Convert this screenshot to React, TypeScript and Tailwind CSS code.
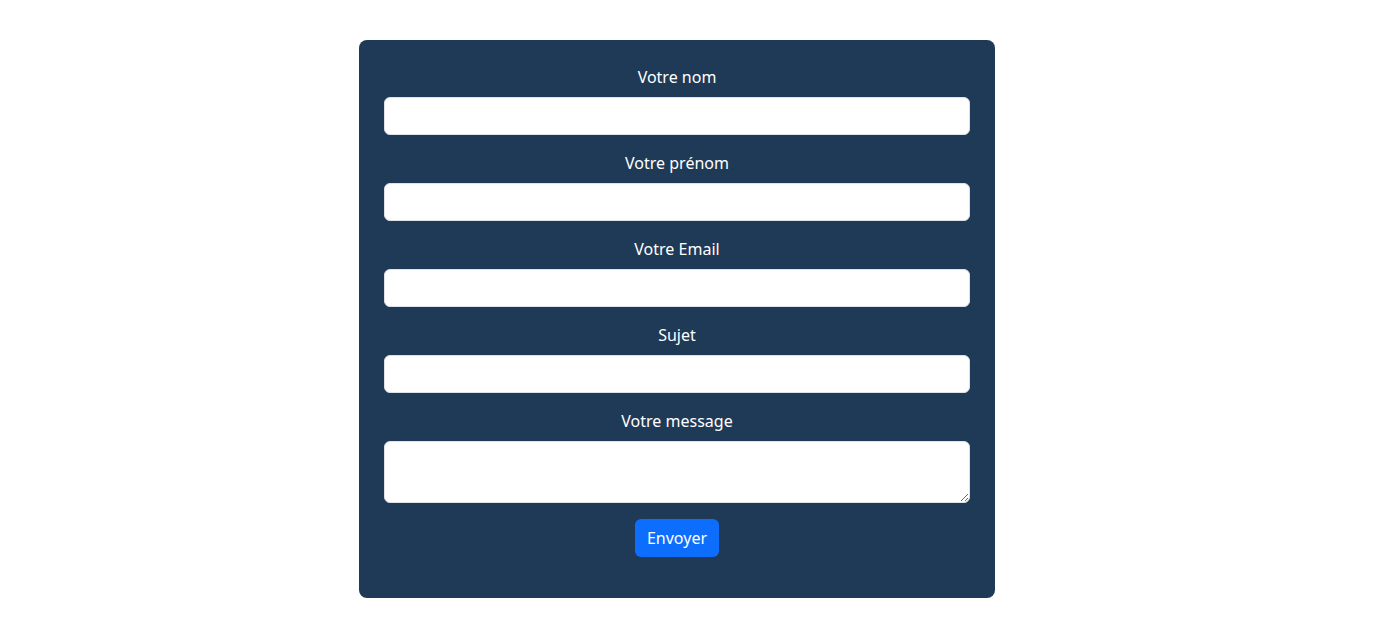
import React from 'react';

const fields = ['Votre nom', 'Votre prénom', 'Votre Email', 'Sujet'];

const App: React.FC = () => {
    return (
        <div className="min-h-[623px] bg-white pt-10 pl-[359px]" style={{ fontFamily: '"Noto Sans", sans-serif' }}>
            {/* Contact card */}
            <form className="w-[636px] rounded-lg bg-[#1f3a57] px-[25px] pt-[25px] pb-[25px] text-white">
                {fields.map((label) => (
                    <div key={label} className="mb-4 flex flex-col items-center">
                        <label className="mb-2 text-base leading-6">{label}</label>
                        <input
                            type="text"
                            className="h-[38px] w-full rounded-md border border-[#dee2e6] bg-white px-3 text-base text-[#212529] outline-none"
                        />
                    </div>
                ))}

                <div className="mb-4 flex flex-col items-center">
                    <label className="mb-2 text-base leading-6">Votre message</label>
                    <textarea
                        rows={2}
                        className="block h-[62px] w-full resize-y rounded-md border border-[#dee2e6] bg-white px-3 py-1.5 text-base text-[#212529] outline-none"
                    />
                </div>

                {/* Submit */}
                <div className="mb-4 flex justify-center">
                    <button
                        type="button"
                        className="h-[38px] rounded-md bg-[#0d6efd] px-3 text-base leading-6 text-white"
                    >
                        Envoyer
                    </button>
                </div>
            </form>
        </div>
    );
};

export default App;
